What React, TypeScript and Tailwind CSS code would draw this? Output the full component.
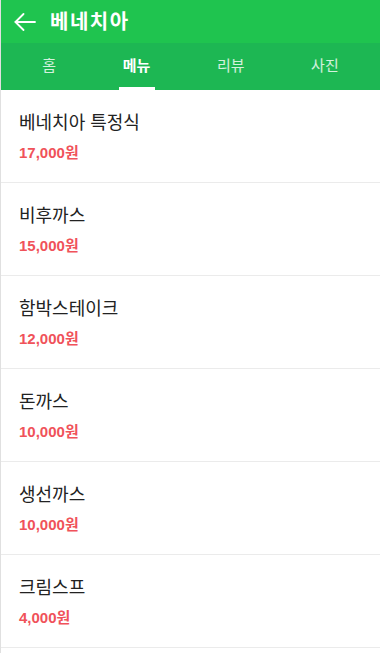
const menuItems = [
  { name: '베네치아 특정식', price: '17,000원' },
  { name: '비후까스', price: '15,000원' },
  { name: '함박스테이크', price: '12,000원' },
  { name: '돈까스', price: '10,000원' },
  { name: '생선까스', price: '10,000원' },
  { name: '크림스프', price: '4,000원' },
];

const tabs = ['홈', '메뉴', '리뷰', '사진'];

function BackArrow() {
  return (
    <svg width="22" height="18" viewBox="0 0 22 18" fill="none" stroke="white" strokeWidth="1.8" strokeLinecap="round" strokeLinejoin="round">
      <path d="M21 9H1.5" />
      <path d="M9.5 1L1.5 9L9.5 17" />
    </svg>
  );
}

export default function App() {
  return (
    <div
      className="min-h-[653px] w-[380px] bg-white border-l border-[#e0e0e0]"
      style={{ fontFamily: '"Liberation Sans", "Noto Sans CJK KR", sans-serif' }}
    >
      <header className="h-[43px] bg-[#1fc44f] flex items-center pl-[13px] gap-[14px] text-white">
        <BackArrow />
        <h1 className="text-[20px] font-bold leading-none tracking-[1.5px]">베네치아</h1>
      </header>
      <nav className="h-[47px] bg-[#1db753] flex px-2">
        {tabs.map((tab) => {
          const active = tab === '메뉴';
          return (
            <div key={tab} className="relative flex-auto flex items-center justify-center">
              <span
                className={
                  active
                    ? 'text-[15px] font-bold text-white'
                    : 'text-[15px] text-white/80'
                }
              >
                {tab}
              </span>
              {active && (
                <div className="absolute bottom-0 left-1/2 -translate-x-1/2 w-9 h-[3px] bg-white" />
              )}
            </div>
          );
        })}
      </nav>
      <ul>
        {menuItems.map((item) => (
          <li key={item.name} className="h-[93px] border-b border-[#ebebeb] px-[18px] pt-[20px]">
            <div className="text-[18px] text-[#222] leading-[26px]">{item.name}</div>
            <div className="mt-[7px] text-[15px] font-bold text-[#f0525a] leading-[20px]">
              {item.price}
            </div>
          </li>
        ))}
      </ul>
    </div>
  );
}
